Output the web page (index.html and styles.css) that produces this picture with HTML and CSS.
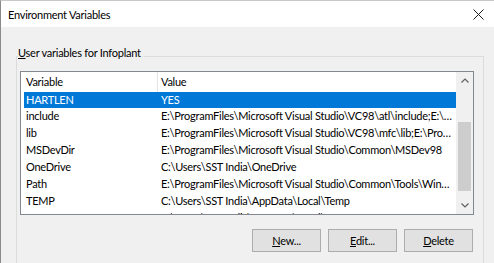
FILE: index.html
```html
<!doctype html>
<html lang="en">
  <head>
    <meta charset="utf-8">
    <title>Environment Variables</title>
    <link rel="stylesheet" href="styles.css">
  </head>
  <body>
    <div class="window">
      <div class="titlebar">
        <span class="title">Environment Variables</span>
        <svg class="close" width="11" height="11" viewBox="0 0 11 11">
          <path d="M0.5 0.5 L10.5 10.5 M10.5 0.5 L0.5 10.5" stroke="#1a1a1a" stroke-width="1" fill="none"/>
        </svg>
      </div>

      <div class="content">
        <div class="group">
          <div class="legend"><u>U</u>ser variables for Infoplant</div>

          <div class="listbox">
            <div class="rows">
              <div class="row head">
                <div class="cell var">Variable</div>
                <div class="cell val sep">Value</div>
              </div>
              <div class="row selected">
                <div class="cell var">HARTLEN</div>
                <div class="cell val">YES</div>
              </div>
              <div class="row">
                <div class="cell var">include</div>
                <div class="cell val">E:\ProgramFiles\Microsoft Visual Studio\VC98\atl\include;E:\ProgramFiles\Microsoft</div>
              </div>
              <div class="row">
                <div class="cell var">lib</div>
                <div class="cell val">E:\ProgramFiles\Microsoft Visual Studio\VC98\mfc\lib;E:\ProgramFiles\Microsoft</div>
              </div>
              <div class="row">
                <div class="cell var">MSDevDir</div>
                <div class="cell val">E:\ProgramFiles\Microsoft Visual Studio\Common\MSDev98</div>
              </div>
              <div class="row">
                <div class="cell var">OneDrive</div>
                <div class="cell val">C:\Users\SST India\OneDrive</div>
              </div>
              <div class="row">
                <div class="cell var">Path</div>
                <div class="cell val">E:\ProgramFiles\Microsoft Visual Studio\Common\Tools\WinNT;E:\ProgramFiles</div>
              </div>
              <div class="row">
                <div class="cell var">TEMP</div>
                <div class="cell val">C:\Users\SST India\AppData\Local\Temp</div>
              </div>
              <div class="row">
                <div class="cell var">TMP</div>
                <div class="cell val">C:\Users\SST India\AppData\Local\Temp</div>
              </div>
            </div>

            <div class="scrollbar">
              <svg class="arrow" width="8" height="5" viewBox="0 0 8 5">
                <path d="M0.5 4.5 L4 1 L7.5 4.5" stroke="#606060" stroke-width="1.2" fill="none"/>
              </svg>
              <div class="track"><div class="thumb"></div></div>
              <svg class="arrow" width="8" height="5" viewBox="0 0 8 5">
                <path d="M0.5 0.5 L4 4 L7.5 0.5" stroke="#606060" stroke-width="1.2" fill="none"/>
              </svg>
            </div>
          </div>

          <div class="buttons">
            <button class="btn"><u>N</u>ew...</button>
            <button class="btn"><u>E</u>dit...</button>
            <button class="btn"><u>D</u>elete</button>
          </div>
        </div>
      </div>
    </div>
  </body>
</html>
```

FILE: styles.css
```css
html, body {
  margin: 0;
  height: 100%;
  overflow: hidden;
}

body {
  font-family: "Lato", "Noto Sans", sans-serif;
  font-size: 11px;
  letter-spacing: -0.25px;
  color: #000;
  background: #f0f0f0;
}

.window {
  height: 263px;
  display: flex;
  flex-direction: column;
  border-left: 1px solid #8a8a8a;
  border-top: 1px solid #c8c8c8;
  box-sizing: border-box;
}

.titlebar {
  height: 26px;
  background: #fff;
  display: flex;
  align-items: center;
  justify-content: space-between;
  padding: 0 10px 0 7px;
  flex-shrink: 0;
}

.title {
  color: #000;
}

.close {
  display: block;
}

.content {
  flex: 1;
  padding: 29px 10px 0 15px;
}

.group {
  position: relative;
  border: 1px solid #dcdcdc;
  border-bottom: none;
  height: 100%;
  box-sizing: border-box;
  padding: 14px 9px 0 3px;
}

.legend {
  position: absolute;
  top: -12px;
  left: 1px;
  background: #f0f0f0;
  padding-right: 2px;
  line-height: 16px;
}

.listbox {
  display: flex;
  height: 144px;
  border: 1px solid #828790;
  background: #fff;
  box-sizing: border-box;
}

.rows {
  flex: 1;
  min-width: 0;
  overflow: hidden;
  padding-left: 3px;
}

.row {
  display: grid;
  grid-template-columns: 133px 1fr;
  height: 17px;
  line-height: 16px;
}

.row.head {
  height: 20px;
  line-height: 20px;
}

.row.selected {
  background: #0078d7;
  color: #fff;
  height: 16px;
}

.cell {
  padding-left: 2px;
  white-space: nowrap;
  overflow: hidden;
  text-overflow: ellipsis;
}

.cell.val {
  padding-left: 4px;
  padding-right: 2px;
}

.cell.sep {
  border-left: 1px solid #e5e5e5;
  padding-left: 3px;
}

.scrollbar {
  width: 17px;
  background: #f0f0f0;
  display: flex;
  flex-direction: column;
  align-items: center;
  padding: 6px 0;
  box-sizing: border-box;
}

.arrow {
  display: block;
  flex-shrink: 0;
}

.track {
  flex: 1;
  width: 100%;
  padding: 39px 2px 12px;
  box-sizing: border-box;
}

.thumb {
  height: 100%;
  background: #cdcdcd;
}

.buttons {
  display: flex;
  justify-content: flex-end;
  gap: 7px;
  margin-top: 14px;
  padding-right: 1px;
}

.btn {
  width: 69px;
  height: 23px;
  font: inherit;
  letter-spacing: inherit;
  color: #000;
  background: #e1e1e1;
  border: 1px solid #adadad;
  padding: 0;
}
```
